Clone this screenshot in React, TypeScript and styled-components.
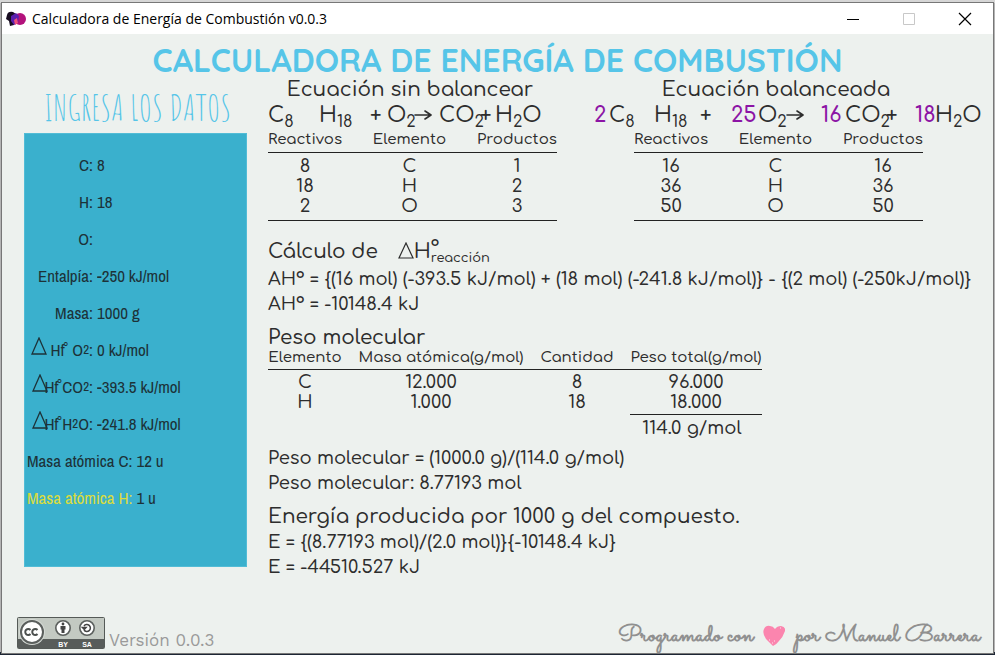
import React from "react";
import styled, { createGlobalStyle } from "styled-components";

const ROUND = `Comfortaa, Quicksand, "Open Sans", sans-serif`;
const INK = "#2d2d2d";

const GlobalStyle = createGlobalStyle`
  * { box-sizing: border-box; }
  body { margin: 0; background: #b4b4b4; }
`;

const Desktop = styled.div`
  display: flex;
  min-height: 100vh;
  padding: 2px 1px 1px;
  background: linear-gradient(#d6d6d6 3px, #b4b4b4 3px, #b4b4b4 calc(100% - 3px), #1d2634 calc(100% - 3px));
`;

const AppWindow = styled.div`
  display: flex;
  flex: 1;
  flex-direction: column;
  min-width: 0;
  border: 1px solid #777;
  background: #edf1ee;
  color: ${INK};
  font-family: ${ROUND};
  font-weight: 500;
`;

const TitleBar = styled.header`
  display: flex;
  align-items: center;
  height: 31px;
  padding-left: 4px;
  gap: 6px;
  background: #fff;
`;

const WindowTitle = styled.span`
  flex: 1;
  color: #000;
  font: 14px/20px "Open Sans", "Noto Sans", sans-serif;
`;

const WindowControls = styled.div`
  display: flex;
  height: 100%;
`;

const WindowButton = styled.button`
  display: flex;
  align-items: center;
  justify-content: center;
  width: 56px;
  padding: 0;
  border: 0;
  background: transparent;
  color: #000;
  &:disabled { color: #c8c8c8; }
`;

const Title = styled.h1`
  margin: 0;
  padding-top: 9px;
  color: #56c5e8;
  font: 700 32px/35px Quicksand, Comfortaa, sans-serif;
  text-align: center;
`;

const Body = styled.div`
  display: grid;
  grid-template-columns: 266px minmax(0, 1fr);
  flex: 1;
  align-items: start;
`;

const Sidebar = styled.aside`
  padding: 4px 21px 0 22px;
`;

const SidebarTitle = styled.h2`
  margin: 0;
  padding-left: 4px;
  color: #56c5e8;
  font: 400 36px/51px "Amatic SC", "Liberation Sans Narrow", sans-serif;
  text-align: center;
  white-space: nowrap;
`;

const DataForm = styled.form`
  display: flex;
  flex-direction: column;
  padding: 12px 0 50px 2px;
  border: 1px solid #52bcd6;
  background: #3ab0cd;
  color: #1d3238;
  font: 17px/37px "Archivo Narrow", "Liberation Sans", sans-serif;
`;

const Field = styled.div`
  display: flex;
  gap: 4px;
`;

const FieldLabel = styled.label<{ $active?: boolean }>`
  display: flex;
  flex: none;
  justify-content: flex-end;
  min-width: 66px;
  color: ${(p) => (p.$active ? "#dcdc3c" : "inherit")};
  white-space: pre;
`;

const FieldInput = styled.input`
  flex: 1;
  min-width: 0;
  height: 37px;
  padding: 0;
  border: 0;
  outline: 0;
  background: transparent;
  color: inherit;
  font: inherit;
`;

const DeltaMark = styled.svg<{ $overlap?: boolean }>`
  flex: none;
  width: 16px;
  height: 18px;
  margin: 6px ${(p) => (p.$overlap ? "-4px" : "auto")} 0 4px;
`;

const Formation = styled.span`
  position: relative;
  &::after {
    content: "°";
    position: absolute;
    top: 9px;
    right: -4px;
    font-size: 14px;
    line-height: 14px;
  }
`;

const Small = styled.small`
  font-size: 13px;
`;

const Results = styled.main`
  min-width: 0;
`;

const Equations = styled.div`
  display: grid;
  grid-template-columns: 326px minmax(0, 1fr);
`;

const Balance = styled.section<{ $inset?: number }>`
  --inset: ${(p) => p.$inset || 0}px;
`;

const BalanceTitle = styled.h2`
  width: 284px;
  margin: 0 0 0 var(--inset);
  font: 500 20px/24px ${ROUND};
  text-align: center;
  white-space: nowrap;
`;

const Equation = styled.div<{ $columns: string }>`
  display: grid;
  grid-template-columns: ${(p) => p.$columns};
  height: 26px;
  font-size: 21px;
  line-height: 26px;
  white-space: nowrap;
`;

const Term = styled.span`
  sub {
    position: relative;
    top: 5px;
    font-size: 16px;
    line-height: 0;
    vertical-align: baseline;
  }
`;

const Arrow = styled.svg`
  align-self: center;
  width: 18px;
  height: 12px;
`;

const Coefficient = styled.b`
  color: #8c14a5;
  font-weight: 600;
`;

const DataTable = styled.table`
  border-collapse: separate;
  border-spacing: 0;
  table-layout: fixed;
  text-align: center;
  th, td { padding: 0; white-space: nowrap; }
  th { border-bottom: 1px solid #222; font: 500 15px/22px ${ROUND}; }
  td { font-size: 18px; line-height: 20px; }
`;

const BalanceTable = styled(DataTable)`
  width: 289px;
  margin-left: var(--inset);
  padding-bottom: 4px;
  border-bottom: 1px solid #222;
  th { height: 25px; }
  tbody tr:first-child td { padding-top: 3px; }
`;

const WeightTable = styled(DataTable)`
  width: 494px;
  th { height: 21px; line-height: 18px; vertical-align: top; }
  tbody tr:first-child td { padding-top: 2px; }
  td:nth-child(2) { padding-right: 20px; }
  th:last-child, td:last-child { padding: 0 0 0 16px; }
`;

const Total = styled.div`
  margin-top: 2px;
  padding-right: 8px;
  border-top: 1px solid #222;
  line-height: 27px;
`;

const Col = styled.col<{ $width: number }>`
  width: ${(p) => p.$width}px;
`;

const Step = styled.section<{ $gap: number }>`
  margin-top: ${(p) => p.$gap}px;
`;

const StepTitle = styled.h2<{ $height: number }>`
  display: flex;
  margin: 0;
  font: 500 20px/${(p) => p.$height}px ${ROUND};
`;

const Formula = styled.p`
  margin: 0;
  font-size: 18px;
  line-height: 25px;
  white-space: nowrap;
`;

const Reaction = styled.span`
  display: flex;
  margin-left: 20px;
`;

const ReactionDelta = styled.svg`
  width: 16px;
  height: 17px;
  margin-top: 5px;
`;

const Scripts = styled.span`
  display: flex;
  flex-direction: column;
  padding-top: 5px;
  font-size: 13px;
  line-height: 12px;
`;

const Ordinal = styled.span`
  font-size: 18px;
  line-height: 10px;
`;

const Footer = styled.footer`
  display: flex;
  align-items: flex-end;
  gap: 4px;
  padding: 0 13px 4px 15px;
`;

const License = styled.svg`
  width: 88px;
  height: 32px;
`;

const Version = styled.span`
  flex: 1;
  color: #9a9a9a;
  font: 400 17px/18px "Work Sans", "Liberation Sans", sans-serif;
`;

const Credit = styled.p`
  display: flex;
  align-items: center;
  gap: 10px;
  margin: 0;
  color: #909090;
  font: 700 25px/26px Sacramento, "Dancing Script", cursive;
  white-space: nowrap;
`;

function Delta({ overlap }: { overlap?: boolean }) {
  return (
    <DeltaMark $overlap={overlap} viewBox="0 0 16 18" aria-hidden="true">
      <path d="M8 1 L15 17 H1 Z" fill="none" stroke="currentColor" strokeWidth="1.3" />
    </DeltaMark>
  );
}

function Yields() {
  return (
    <Arrow viewBox="0 0 18 12" role="img" aria-label="produce">
      <path d="M1 6H17M11 2L17 6L11 10" fill="none" stroke="currentColor" strokeWidth="1.6" strokeLinecap="round" strokeLinejoin="round" />
    </Arrow>
  );
}

const fields: { id: string; label: React.ReactNode; value: string; active?: boolean }[] = [
  { id: "c", label: "C:", value: "8" },
  { id: "h", label: "H:", value: "18" },
  { id: "o", label: "O:", value: "" },
  { id: "entalpia", label: "Entalpía:", value: "-250 kJ/mol" },
  { id: "masa", label: "Masa:", value: "1000 g" },
  { id: "hf-o2", label: <><Delta /><Formation>Hf</Formation>{"  O"}<Small>2</Small>:</>, value: "0 kJ/mol" },
  { id: "hf-co2", label: <><Delta overlap /><Formation>Hf</Formation>{" CO"}<Small>2</Small>:</>, value: "-393.5 kJ/mol" },
  { id: "hf-h2o", label: <><Delta overlap /><Formation>Hf</Formation>{" H"}<Small>2</Small>O:</>, value: "-241.8 kJ/mol" },
  { id: "masa-c", label: "Masa atómica C:", value: "12 u" },
  { id: "masa-h", label: "Masa atómica H:", value: "1 u", active: true },
];

function ElementTable({ rows }: { rows: string[][] }) {
  return (
    <BalanceTable>
      <colgroup><Col $width={74} /><Col $width={135} /><Col $width={80} /></colgroup>
      <thead><tr><th>Reactivos</th><th>Elemento</th><th>Productos</th></tr></thead>
      <tbody>
        {rows.map((r) => <tr key={r[1]}>{r.map((v, i) => <td key={i}>{v}</td>)}</tr>)}
      </tbody>
    </BalanceTable>
  );
}

export default function App() {
  return (
    <Desktop>
      <GlobalStyle />
      <AppWindow>
        <TitleBar>
          <svg width="20" height="16" viewBox="0 0 20 16" aria-hidden="true">
            <path d="M1 4 Q2 0 7 1 L10 3 L8 14 L4 15 L3 10 L0 8 Z" fill="#170c20" />
            <circle cx="14" cy="8" r="6" fill="#b3127c" />
            <path d="M5 5 L10 2 L13 5 L12 12 L8 14 L5 10 Z" fill="#5a1fae" />
            <path d="M8 9 L11 7 L12 12 L9 14 Z" fill="#f0507a" />
          </svg>
          <WindowTitle>Calculadora de Energía de Combustión v0.0.3</WindowTitle>
          <WindowControls>
            <WindowButton aria-label="Minimizar">
              <svg width="14" height="14" viewBox="0 0 14 14"><path d="M1 7.5H13" stroke="currentColor" /></svg>
            </WindowButton>
            <WindowButton aria-label="Maximizar" disabled>
              <svg width="14" height="14" viewBox="0 0 14 14"><path d="M1.500 1.500H12.500V12.500H1.500Z" fill="none" stroke="currentColor" /></svg>
            </WindowButton>
            <WindowButton aria-label="Cerrar">
              <svg width="14" height="14" viewBox="0 0 14 14"><path d="M1 1L13 13M13 1L1 13" stroke="currentColor" strokeWidth="1.2" /></svg>
            </WindowButton>
          </WindowControls>
        </TitleBar>

        <Title>CALCULADORA DE ENERGÍA DE COMBUSTIÓN</Title>

        <Body>
          <Sidebar>
            <SidebarTitle>INGRESA LOS DATOS</SidebarTitle>
            <DataForm>
              {fields.map((f) => (
                <Field key={f.id}>
                  <FieldLabel htmlFor={f.id} $active={f.active}>{f.label}</FieldLabel>
                  <FieldInput id={f.id} defaultValue={f.value} />
                </Field>
              ))}
            </DataForm>
          </Sidebar>

          <Results>
            <Equations>
              <Balance>
                <BalanceTitle>Ecuación sin balancear</BalanceTitle>
                <Equation $columns="51px 51px 17px 27px 25px 41px 15px 1fr">
                  <Term>C<sub>8</sub></Term>
                  <Term>H<sub>18</sub></Term>
                  <Term>+</Term>
                  <Term>O<sub>2</sub></Term>
                  <Yields />
                  <Term>CO<sub>2</sub></Term>
                  <Term>+</Term>
                  <Term>H<sub>2</sub>O</Term>
                </Equation>
                <ElementTable rows={[["8", "C", "1"], ["18", "H", "2"], ["2", "O", "3"]]} />
              </Balance>
              <Balance $inset={40}>
                <BalanceTitle>Ecuación balanceada</BalanceTitle>
                <Equation $columns="15px 45px 46px 31px 27px 28px 35px 24px 41px 29px 20px 1fr">
                  <Coefficient>2</Coefficient>
                  <Term>C<sub>8</sub></Term>
                  <Term>H<sub>18</sub></Term>
                  <Term>+</Term>
                  <Coefficient>25</Coefficient>
                  <Term>O<sub>2</sub></Term>
                  <Yields />
                  <Coefficient>16</Coefficient>
                  <Term>CO<sub>2</sub></Term>
                  <Term>+</Term>
                  <Coefficient>18</Coefficient>
                  <Term>H<sub>2</sub>O</Term>
                </Equation>
                <ElementTable rows={[["16", "C", "16"], ["36", "H", "36"], ["50", "O", "50"]]} />
              </Balance>
            </Equations>

            <Step $gap={16}>
              <StepTitle $height={30}>
                Cálculo de
                <Reaction>
                  <ReactionDelta viewBox="0 0 16 17" aria-hidden="true">
                    <path d="M8 1 L15 16 H1 Z" fill="none" stroke="currentColor" strokeWidth="1.2" />
                  </ReactionDelta>
                  H
                  <Scripts><Ordinal>º</Ordinal><span>reacción</span></Scripts>
                </Reaction>
              </StepTitle>
              <Formula>AHº = {"{(16 mol) (-393.5 kJ/mol) + (18 mol) (-241.8 kJ/mol)} - {(2 mol) (-250kJ/mol)}"}</Formula>
              <Formula>AHº = -10148.4 kJ</Formula>
            </Step>

            <Step $gap={10}>
              <StepTitle $height={22}>Peso molecular</StepTitle>
              <WeightTable>
                <colgroup><Col $width={74} /><Col $width={198} /><Col $width={74} /><Col $width={148} /></colgroup>
                <thead>
                  <tr><th>Elemento</th><th>Masa atómica(g/mol)</th><th>Cantidad</th><th>Peso total(g/mol)</th></tr>
                </thead>
                <tbody>
                  <tr><td>C</td><td>12.000</td><td>8</td><td>96.000</td></tr>
                  <tr><td>H</td><td>1.000</td><td>18</td><td>18.000</td></tr>
                </tbody>
                <tfoot><tr><td colSpan={3} /><td><Total>114.0 g/mol</Total></td></tr></tfoot>
              </WeightTable>
            </Step>

            <Step $gap={4}>
              <Formula>Peso molecular = (1000.0 g)/(114.0 g/mol)</Formula>
              <Formula>Peso molecular: 8.77193 mol</Formula>
            </Step>

            <Step $gap={8}>
              <StepTitle $height={26}>Energía producida por 1000 g del compuesto.</StepTitle>
              <Formula>E = {"{(8.77193 mol)/(2.0 mol)}{-10148.4 kJ}"}</Formula>
              <Formula>E = -44510.527 kJ</Formula>
            </Step>
          </Results>
        </Body>

        <Footer>
          <License viewBox="0 0 88 32" role="img" aria-label="CC BY SA">
            <rect x="0.500" y="0.500" width="87" height="31" rx="1" fill="#c3c9c2" stroke="#555a57" />
            <rect x="1" y="22" width="86" height="9" fill="#585c5a" />
            <circle cx="15" cy="15" r="13" fill="#d5dad5" />
            <circle cx="15" cy="15" r="11" fill="#fff" stroke="#5b5f5d" strokeWidth="2" />
            <path d="M13.500 13A3 3 0 1 0 13.500 17M20.500 13A3 3 0 1 0 20.500 17" fill="none" stroke="#4c504e" strokeWidth="2" />
            <circle cx="46" cy="11" r="7.200" fill="#fff" stroke="#5b5f5d" strokeWidth="1.600" />
            <circle cx="46" cy="7" r="1.400" fill="#444" />
            <path d="M43.500 9H48.500V12.500H47.500V16H44.500V12.500H43.500Z" fill="#444" />
            <circle cx="70" cy="11" r="7.200" fill="#fff" stroke="#5b5f5d" strokeWidth="1.600" />
            <path d="M67 9A3.500 3.500 0 1 1 67 13M65.500 10.500H69L67.300 12.300Z" fill="none" stroke="#444" strokeWidth="1.500" />
            <text x="46" y="29.500" textAnchor="middle" fontFamily="Liberation Sans" fontSize="7" fontWeight="700" fill="#fff">BY</text>
            <text x="70" y="29.500" textAnchor="middle" fontFamily="Liberation Sans" fontSize="7" fontWeight="700" fill="#fff">SA</text>
          </License>
          <Version>Versión 0.0.3</Version>
          <Credit>
            Programado con
            <svg width="22" height="22" viewBox="0 0 22 22" aria-label="amor">
              <path d="M10 21 Q7 18 3 14 Q-1 8 1 4 Q3 0 7 1 Q10 1 12 4 Q14 1 18 1 Q23 2 22 6 Q20 12 16 16 Q13 20 10 21Z" fill="#fb85ae" />
              <path d="M9 18h1M6 15h1M17 3h1M11 16h1" stroke="#fde0ea" />
            </svg>
            por Manuel Barrera
          </Credit>
        </Footer>
      </AppWindow>
    </Desktop>
  );
}
